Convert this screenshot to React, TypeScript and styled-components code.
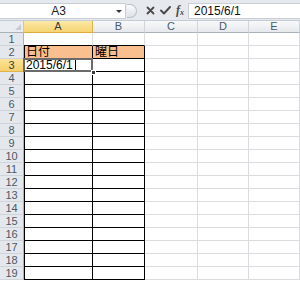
import React from "react";
import styled, { createGlobalStyle } from "styled-components";

const GlobalStyle = createGlobalStyle`
  html, body { margin: 0; padding: 0; background: #ffffff; }
  body { font-family: "Liberation Sans", "Noto Sans CJK JP", sans-serif; }
`;

const COLS = ["A", "B", "C", "D", "E"];
const COL_WIDTHS = "24px 69px 52px 53px 51px 51px";
const ROWS = Array.from({ length: 19 }, (_, i) => i + 1);

const App: React.FC = () => {
  return (
    <>
      <GlobalStyle />
      <SWindow>
        <SFormulaBar>
          <SNameBox>
            <SNameText>A3</SNameText>
            <SDropArrow />
          </SNameBox>
          <SGrip />
          <SIconGroup>
            <svg width="9" height="9" viewBox="0 0 9 9">
              <path d="M1.5 1.5 L7.5 7.5 M7.5 1.5 L1.5 7.5" stroke="#4a4a4a" strokeWidth="1.8" strokeLinecap="round" />
            </svg>
            <svg width="11" height="9" viewBox="0 0 11 9">
              <path d="M1 4.5 L4 7.5 L10 1" stroke="#4a4a4a" strokeWidth="1.9" fill="none" strokeLinecap="round" strokeLinejoin="round" />
            </svg>
            <SFx>
              f<sub>x</sub>
            </SFx>
          </SIconGroup>
          <SFormulaInput>2015/6/1</SFormulaInput>
        </SFormulaBar>
        <SGrid>
          <SCorner>
            <SCornerMark />
          </SCorner>
          {COLS.map((c) => (
            <SColHeader key={c} active={c === "A"}>
              {c}
            </SColHeader>
          ))}
          {ROWS.map((r) => (
            <React.Fragment key={r}>
              <SRowHeader active={r === 3}>{r}</SRowHeader>
              {COLS.map((_, ci) => {
                const boxed = r >= 2 && ci <= 1;
                const aboveBox = r === 1 && ci <= 1;
                const leftEdge = r >= 2 && ci === 0;
                let content: React.ReactNode = null;
                if (r === 2 && ci === 0) content = "日付";
                if (r === 2 && ci === 1) content = "曜日";
                if (r === 3 && ci === 0)
                  content = (
                    <>
                      2015/6/1<SCaret />
                    </>
                  );
                return (
                  <SCell
                    key={ci}
                    boxed={boxed}
                    blackBottom={aboveBox || boxed}
                    leftEdge={leftEdge}
                    header={r === 2 && ci <= 1}
                  >
                    {content}
                    {r === 3 && ci === 0 && (
                      <>
                        <SSelection />
                        <SHandle />
                      </>
                    )}
                  </SCell>
                );
              })}
            </React.Fragment>
          ))}
        </SGrid>
      </SWindow>
    </>
  );
};

const SWindow = styled.div`
  width: 300px;
  height: 281px;
  overflow: hidden;
  background: #ffffff;
`;

const SFormulaBar = styled.div`
  display: flex;
  align-items: center;
  height: 21px;
  padding: 3px 0 2px 0;
  box-sizing: border-box;
  background: #e6eaef;
  border-bottom: 1px solid #c5cbd3;
`;

const SNameBox = styled.div`
  position: relative;
  display: flex;
  align-items: center;
  justify-content: center;
  width: 126px;
  height: 16px;
  box-sizing: border-box;
  background: #ffffff;
  border: 1px solid #c9ced6;
  border-left: none;
`;

const SNameText = styled.span`
  font-size: 12px;
  color: #222;
  margin-right: 8px;
`;

const SDropArrow = styled.div`
  position: absolute;
  right: 3px;
  top: 6px;
  width: 0;
  height: 0;
  border-left: 3px solid transparent;
  border-right: 3px solid transparent;
  border-top: 3px solid #333;
`;

const SGrip = styled.div`
  width: 10px;
  height: 14px;
  margin-left: 1px;
  border-radius: 0 7px 7px 0;
  background: linear-gradient(#fbfcfd, #dde1e6);
  border: 1px solid #b9c0c9;
  border-left: none;
  box-sizing: border-box;
`;

const SIconGroup = styled.div`
  display: flex;
  align-items: center;
  gap: 5px;
  padding: 0 4px 0 9px;
  height: 16px;
`;

const SFx = styled.span`
  font-family: "Liberation Serif", serif;
  font-style: italic;
  font-weight: bold;
  font-size: 12px;
  color: #4a4a4a;
  sub {
    font-size: 8px;
    vertical-align: -1px;
  }
`;

const SFormulaInput = styled.div`
  flex: 1;
  height: 16px;
  box-sizing: border-box;
  background: #ffffff;
  border: 1px solid #c9ced6;
  border-right: none;
  font-size: 12px;
  line-height: 14px;
  padding-left: 5px;
  color: #111;
`;

const SGrid = styled.div`
  display: grid;
  grid-template-columns: ${COL_WIDTHS};
  grid-template-rows: 12px repeat(19, 13px);
`;

const SCorner = styled.div`
  position: relative;
  background: #e9ecf0;
  border-right: 1px solid #c3c8cf;
  border-bottom: 1px solid #aab1ba;
  box-sizing: border-box;
`;

const SCornerMark = styled.div`
  position: absolute;
  right: 2px;
  bottom: 2px;
  width: 0;
  height: 0;
  border-left: 6px solid transparent;
  border-bottom: 6px solid #c7ccd3;
`;

const SColHeader = styled.div<{ active: boolean }>`
  display: flex;
  align-items: center;
  justify-content: center;
  box-sizing: border-box;
  font-size: 11px;
  line-height: 11px;
  color: ${(p) => (p.active ? "#3b3b3b" : "#4d5866")};
  background: ${(p) =>
    p.active
      ? "linear-gradient(#fbe9a6, #f6d472)"
      : "linear-gradient(#f8f9fa, #e6e9ed)"};
  border-right: 1px solid ${(p) => (p.active ? "#e0b44c" : "#d0d5db")};
  border-bottom: 1px solid ${(p) => (p.active ? "#e0a93a" : "#aab1ba")};
`;

const SRowHeader = styled.div<{ active: boolean }>`
  display: flex;
  align-items: center;
  justify-content: center;
  box-sizing: border-box;
  font-size: 11px;
  line-height: 12px;
  color: ${(p) => (p.active ? "#3b3b3b" : "#4d5866")};
  background: ${(p) =>
    p.active ? "linear-gradient(#fbe39a, #f6d06c)" : "#e4e8ed"};
  border-right: 1px solid ${(p) => (p.active ? "#e0a93a" : "#aab1ba")};
  border-bottom: 1px solid ${(p) => (p.active ? "#e0b44c" : "#cfd4da")};
`;

const SCell = styled.div<{
  boxed: boolean;
  blackBottom: boolean;
  leftEdge: boolean;
  header: boolean;
}>`
  position: relative;
  display: flex;
  align-items: center;
  box-sizing: border-box;
  padding-left: 2px;
  font-family: "Liberation Sans", "Noto Sans CJK JP", sans-serif;
  font-size: 12px;
  line-height: 12px;
  color: #000;
  white-space: nowrap;
  background: ${(p) => (p.header ? "#fabf8f" : "#ffffff")};
  border-right: 1px solid ${(p) => (p.boxed ? "#000" : "#dadcdf")};
  border-bottom: 1px solid ${(p) => (p.blackBottom ? "#000" : "#dadcdf")};
  box-shadow: ${(p) => (p.leftEdge ? "inset 1px 0 0 #000" : "none")};
`;

const SCaret = styled.span`
  display: inline-block;
  width: 1px;
  height: 11px;
  margin-left: 2px;
  background: #000;
`;

const SSelection = styled.div`
  position: absolute;
  left: -1px;
  top: -1px;
  right: -1px;
  bottom: -1px;
  border: 2px solid #6b6b6b;
  pointer-events: none;
`;

const SHandle = styled.div`
  position: absolute;
  right: -4px;
  bottom: -4px;
  width: 5px;
  height: 5px;
  background: #3a3a3a;
  border: 1px solid #ffffff;
  box-sizing: border-box;
  z-index: 2;
`;

export default App;
